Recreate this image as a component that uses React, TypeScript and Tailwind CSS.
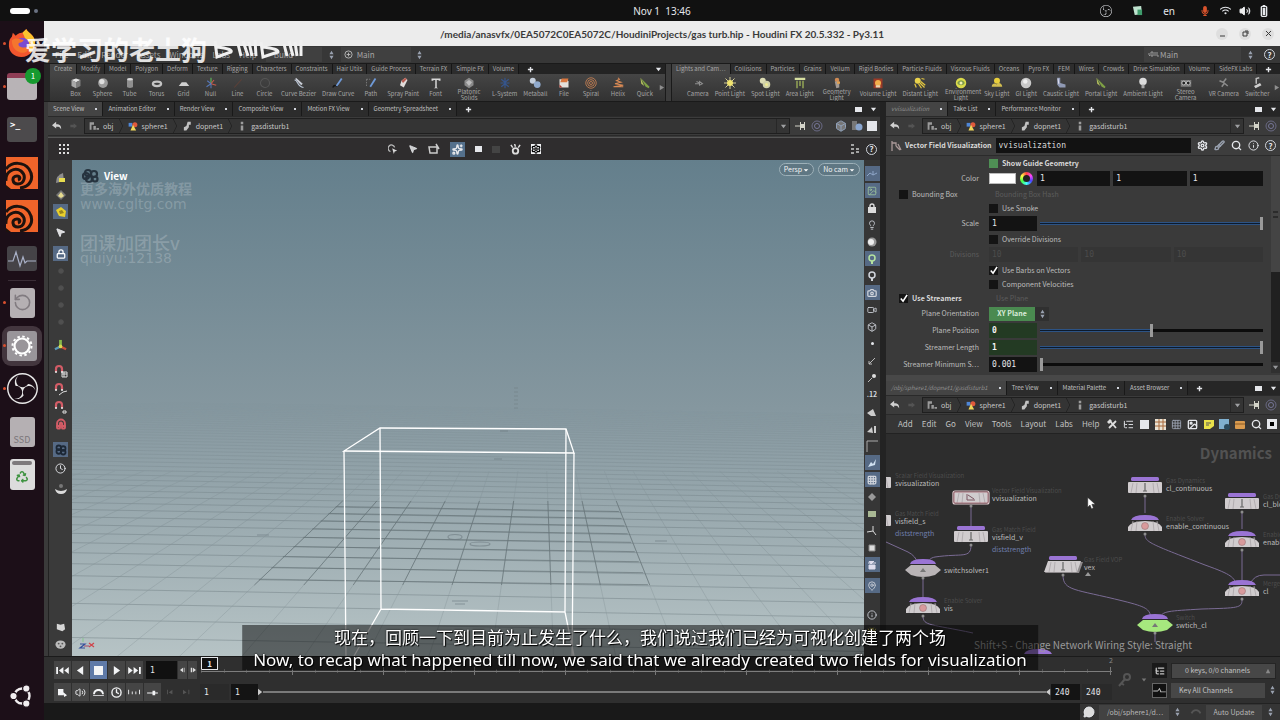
import type { ReactNode } from "react"
import clsx from "clsx"
import {
  BoxIcon, BugIcon, CameraIcon, CircleIcon, ClockIcon, Grid3x3Icon, ImageIcon,
  InfoIcon, LightbulbIcon, ListTreeIcon, LockIcon, MagnetIcon, MapPinIcon, MousePointer2Icon,
  RotateCcwIcon, SearchIcon, SettingsIcon, SparklesIcon, VideoIcon, BrushIcon,
  Volume2Icon, MessageCircleIcon,
} from "lucide-react"
import { FaRecycle, FaWifi, FaMicrophone, FaBatteryFull } from "react-icons/fa6"
import { SiObsstudio } from "react-icons/si"

type Tool = { name: string; icon: string; wide?: boolean }

const MENUS = ["File", "Edit", "Render", "Assets", "Windows", "Labs", "Help"]

const LEFT_SHELF_TABS = [
  "Create", "Modify", "Model", "Polygon", "Deform", "Texture", "Rigging", "Characters", "Constraints",
  "Hair Utils", "Guide Process", "Terrain FX", "Simple FX", "Volume",
]

const RIGHT_SHELF_TABS = [
  "Lights and Cam…", "Collisions", "Particles", "Grains", "Vellum", "Rigid Bodies", "Particle Fluids",
  "Viscous Fluids", "Oceans", "Pyro FX", "FEM", "Wires", "Crowds", "Drive Simulation", "Volume", "SideFX Labs",
]

const LEFT_TOOLS: Tool[] = [
  { name: "Box", icon: "box" },
  { name: "Sphere", icon: "sphere" },
  { name: "Tube", icon: "tube" },
  { name: "Torus", icon: "torus" },
  { name: "Grid", icon: "grid" },
  { name: "Null", icon: "null" },
  { name: "Line", icon: "line" },
  { name: "Circle", icon: "circle" },
  { name: "Curve Bezier", icon: "bezier" },
  { name: "Draw Curve", icon: "draw" },
  { name: "Path", icon: "path" },
  { name: "Spray Paint", icon: "spray" },
  { name: "Font", icon: "font" },
  { name: "Platonic Solids", icon: "platonic", wide: true },
  { name: "L-System", icon: "lsystem" },
  { name: "Metaball", icon: "metaball" },
  { name: "File", icon: "file" },
  { name: "Spiral", icon: "spiral" },
  { name: "Helix", icon: "helix" },
  { name: "Quick", icon: "portal" },
]

const RIGHT_TOOLS: Tool[] = [
  { name: "Camera", icon: "camera" },
  { name: "Point Light", icon: "point" },
  { name: "Spot Light", icon: "spot" },
  { name: "Area Light", icon: "area" },
  { name: "Geometry Light", icon: "geo", wide: true },
  { name: "Volume Light", icon: "volume" },
  { name: "Distant Light", icon: "distant" },
  { name: "Environment Light", icon: "env", wide: true },
  { name: "Sky Light", icon: "sky" },
  { name: "GI Light", icon: "gi" },
  { name: "Caustic Light", icon: "caustic" },
  { name: "Portal Light", icon: "portal" },
  { name: "Ambient Light", icon: "ambient" },
  { name: "Stereo Camera", icon: "stereo", wide: true },
  { name: "VR Camera", icon: "vr" },
  { name: "Switcher", icon: "switcher" },
]

const SHELF_ART: Record<string, ReactNode> = {
  box: <><path d="M2 4l6-2 6 2-6 3z" fill="#e4e4e4" /><path d="M2 4l6 3v8l-6-3z" fill="#a9a9a9" /><path d="M14 4L8 7v8l6-3z" fill="#7d7d7d" /></>,
  sphere: <><circle cx="8" cy="8" r="6.5" fill="#9c9c9c" /><circle cx="6.5" cy="6" r="3.5" fill="#dedede" /></>,
  tube: <><path d="M4 3v10c0 2 8 2 8 0V3z" fill="#8f8f8f" /><ellipse cx="8" cy="3" rx="4" ry="1.6" fill="#d8d8d8" /></>,
  torus: <ellipse cx="8" cy="9" rx="5.5" ry="3" fill="none" stroke="#c4c4c4" strokeWidth="3" />,
  grid: <path d="M5 7h6l4 5H1z" fill="#cfcfcf" />,
  null: <><path d="M8 1v8" stroke="#5db35a" strokeWidth="1.6" /><path d="M8 9l7 2M8 9l4-5" stroke="#c75a4a" strokeWidth="1.6" /><path d="M8 9l-6 4M8 9L3 5M8 9v6" stroke="#5678b8" strokeWidth="1.4" /></>,
  line: <path d="M3 14L13 3" stroke="#5d4038" strokeWidth="1.4" />,
  circle: <circle cx="8" cy="8" r="6" fill="none" stroke="#555" strokeWidth="1.4" />,
  bezier: <><path d="M2 4c5 0 3 9 12 10" fill="none" stroke="#b9c4d4" strokeWidth="1.6" /><path d="M4 1l9 8-2 2-8-8z" fill="#c9cdd6" /></>,
  draw: <><path d="M1 14c3-6 4 0 7-3" fill="none" stroke="#141414" strokeWidth="2" /><path d="M13 2L6 12" stroke="#6f9ad8" strokeWidth="2.4" /></>,
  path: <><path d="M2 3h5M2 3v10" fill="none" stroke="#888" strokeDasharray="2 1.5" /><path d="M14 2L7 13" stroke="#6f9ad8" strokeWidth="2.4" /></>,
  spray: <><path d="M6 5l5-4 3 3-5 10-5-3z" fill="#e0dcda" /><path d="M6 5l5-4 2 2-5 5z" fill="#b65a50" /></>,
  font: <path d="M2 2h12v3h-2l-1-1H9v10l2 1H5l2-1V4H5L4 5H2z" fill="#d8d8d8" />,
  platonic: <><path d="M8 1l6 4v6l-6 4-6-4V5z" fill="#8a8a8a" /><path d="M8 4l4 3-4 5-4-5z" fill="#bdbdbd" /></>,
  lsystem: <path d="M8 1v14M3 3l5 4 5-4M2 8h12M3 13l5-4 5 4" fill="none" stroke="#35568f" strokeWidth="1.5" />,
  metaball: <><circle cx="5" cy="5" r="4" fill="#c4cedb" /><circle cx="11" cy="10" r="4.5" fill="#8fa9cc" /></>,
  file: <><path d="M2 3h10l2 3v8H2z" fill="#e4e1dc" /><path d="M5 2h9l-2 5H3z" fill="#d9773f" /><path d="M2 10l4 4H2z" fill="#b03a30" /></>,
  spiral: <><circle cx="8" cy="8" r="7" fill="none" stroke="#d98a55" /><circle cx="8" cy="8" r="4.5" fill="none" stroke="#d98a55" /><circle cx="8" cy="8" r="2" fill="none" stroke="#d98a55" /></>,
  helix: <path d="M8 1l2 2-4 2 6 2-8 2 11 2-13 2h13" fill="none" stroke="#d98a55" strokeWidth="1.4" />,
  camera: <path d="M6 6l4 2V6l4 3-4 2V9H4" fill="none" stroke="#8d8d8d" strokeWidth="1.4" />,
  point: <><path d="M8 0v16M0 8h16M2 2l12 12M14 2L2 14" stroke="#e5dfa0" strokeWidth="1.2" /><circle cx="8" cy="8" r="4" fill="#f0e36f" /></>,
  spot: <><circle cx="5" cy="5" r="4" fill="#dcdcb4" /><circle cx="10" cy="10" r="5" fill="#cfd0a8" /><circle cx="10" cy="10" r="2" fill="#eeea90" /></>,
  area: <><path d="M1 1h14v3H1z" fill="#d7dfa0" /><path d="M4 5v10M8 5v7M12 5v10" stroke="#a9bf5c" strokeWidth="1.6" /></>,
  geo: <><circle cx="8" cy="4" r="3" fill="#cf8b55" /><path d="M5 6h6v8l-4 1z" fill="#a39a94" /><path d="M8 6h4v3H8z" fill="#e3a04d" /></>,
  volume: <><rect x="2" y="2" width="12" height="13" fill="#9d3a26" /><circle cx="8" cy="8" r="4" fill="#f2b04c" /><path d="M5 11h6v3H5z" fill="#e9d7b0" /></>,
  distant: <><circle cx="5" cy="5" r="4" fill="#e9d24c" /><path d="M1 9l2 5M6 9l4 6M9 6l6 5M10 2l4 1M8 8l6 6" stroke="#e3c63f" strokeWidth="1.6" /></>,
  env: <><circle cx="8" cy="8" r="7" fill="#d9d94a" /><path d="M3 8c2-5 8-5 10 0-2 4-8 4-10 0z" fill="#7d9a4a" /><circle cx="8" cy="8" r="2" fill="#f3f0b0" /></>,
  sky: <><circle cx="8" cy="5" r="4" fill="#e9cf3c" /><path d="M1 13c0-5 5-5 6-3 2-4 8-2 8 3z" fill="#d2bd50" /></>,
  gi: <><circle cx="8" cy="8" r="7" fill="#c9c9c9" /><circle cx="7" cy="6" r="3" fill="#efefef" /></>,
  caustic: <><path d="M3 1l4 0v7l7 2v4H6l-3-4z" fill="#8f99b4" /><path d="M4 2l1 7" stroke="#dde" strokeWidth="1.5" /></>,
  portal: <><path d="M2 1l12 12-1 2-4-2z" fill="#7fa045" /><path d="M2 1l5 11-4-3z" fill="#b3bf5d" /></>,
  ambient: <><circle cx="8" cy="6" r="5" fill="#dcdcdc" /><path d="M6 10h4v5H6z" fill="#a8a8a8" /></>,
  stereo: <><path d="M1 4h14v9H1z" fill="#7c7c7c" /><circle cx="5" cy="8" r="2.5" fill="#222" stroke="#ddd" /><circle cx="11" cy="8" r="2.5" fill="#222" stroke="#ddd" /></>,
  vr: <path d="M2 5l5 2 4-5M7 7l6 5M5 13l3-4" fill="none" stroke="#8c8c8c" strokeWidth="2" />,
  switcher: <><path d="M4 12l8-4 2 3-8 4z" fill="#cfcfcf" /><path d="M7 9V2l4-1" fill="none" stroke="#bdbdbd" strokeWidth="2" /></>,
}

function Art({ name }: { name: string }) {
  return <svg viewBox="0 0 16 16" className="size-3 shrink-0">{SHELF_ART[name]}</svg>
}

function Plus() {
  return (
    <button aria-label="New tab" className="flex items-center px-2 text-gray-200">
      <svg viewBox="0 0 8 8" className="size-[7px]"><path d="M4 1v6M1 4h6" stroke="currentColor" strokeWidth="1.6" /></svg>
    </button>
  )
}

function Caret() {
  return <svg viewBox="0 0 8 8" className="size-[7px] shrink-0 text-gray-200"><path d="M1 2h6L4 6z" fill="currentColor" /></svg>
}

function UpDown() {
  return (
    <svg viewBox="0 0 8 12" className="w-[7px] h-[10px] shrink-0 text-gray-400">
      <path d="M4 1l2.5 4h-5zM4 11l2.5-4h-5z" fill="currentColor" />
    </svg>
  )
}

function Shelf({ tabs, tools, className }: { tabs: string[]; tools: Tool[]; className?: string }) {
  return (
    <div className={clsx("flex flex-col min-w-0 overflow-hidden", className)}>
      <div className="flex h-[13px] bg-[#232323] text-[6px] text-[#a8a8a8]">
        {tabs.map((t, i) => (
          <button
            key={t}
            className={clsx(
              "px-1 border-r border-[#161616] whitespace-nowrap shrink-0",
              i === 0 ? "bg-[#454545]" : "bg-[#2d2d2d]"
            )}
          >
            {t}
          </button>
        ))}
        <Plus />
        <div className="ml-auto flex items-center pr-[3px]"><Caret /></div>
      </div>
      <div className="relative flex-1 flex items-start pl-3 pt-[3px] bg-linear-to-b from-[#454545] to-[#323232] text-[6px] text-[#a5a5a5]">
        {tools.map((t) => (
          <button
            key={t.name}
            className={clsx(
              "shrink-0 flex flex-col items-center",
              t.wide ? "w-10" : "min-w-[27px] px-[3px] gap-[2px]"
            )}
          >
            <Art name={t.icon} />
            <span className={clsx("leading-[6px]", t.wide ? "w-8" : "whitespace-nowrap")}>{t.name}</span>
          </button>
        ))}
        <svg viewBox="0 0 8 8" className="absolute right-0 top-[10px] size-[7px]"><path d="M2 1l5 3-5 3z" fill="#8f8f8f" /></svg>
      </div>
    </div>
  )
}

function PaneTabs({ tabs, italic }: { tabs: string[]; italic?: boolean }) {
  return (
    <div className="flex h-[14px] shrink-0 bg-[#262626] text-[6px] text-[#c0c0c0] overflow-hidden">
      {tabs.map((t, i) => (
        <button
          key={t}
          className={clsx(
            "flex items-center gap-[11px] px-[5px] border-r border-[#191919] whitespace-nowrap shrink-0",
            i === 0 ? "bg-[#444]" : "bg-[#2c2c2c]",
            i === 0 && italic && "italic text-[#8d8d8d]"
          )}
        >
          {t}
          <span className="size-[2px] bg-gray-300" />
        </button>
      ))}
      <Plus />
      <div className="ml-auto flex items-center gap-2 pr-[3px]">
        <span className="w-[7px] h-[5px] bg-gray-200" />
        <Caret />
      </div>
    </div>
  )
}

function CrumbIcon({ kind }: { kind: number }) {
  return (
    <svg viewBox="0 0 16 16" className="size-[10px] shrink-0">
      {kind === 0 && <path d="M1 2h7v4H4v8H1zM7 8h4v6H7zM12 11h4v3h-4z" fill="#9a9a9a" />}
      {kind === 1 && <><path d="M1 3h6v6H1z" fill="#4f87d6" /><circle cx="11" cy="6" r="4" fill="#e05a3c" /><path d="M8 6l5 9H4z" fill="#efd75b" /></>}
      {kind === 2 && <path d="M9 1h5v5h-3v4L7 15H3v-5l4-2z" fill="#c2c2c2" />}
      {kind === 3 && <path d="M6 1h4v4H6zM6 7h4v8H6z" fill="#9c9c9c" />}
    </svg>
  )
}

function PathBar({ extras }: { extras?: boolean }) {
  return (
    <div className="flex items-center h-5 shrink-0 bg-[#3b3b3b] border-y border-[#2a2a2a] pl-1 pr-[3px] text-[7px] text-[#c8c8c8]">
      <button aria-label="Back" className="mr-[7px]">
        <svg viewBox="0 0 12 12" className="size-[10px]"><path d="M0 5l5-4v3c5 0 6 2 6 6-2-3-3-3-6-3v2z" fill="#d0d0d0" /></svg>
      </button>
      <button aria-label="Forward" className="mr-[7px]">
        <svg viewBox="0 0 12 12" className="size-[8px]"><path d="M12 6L7 2v2H2v4h5v2z" fill="#545454" /></svg>
      </button>
      <div className="flex-1 flex items-center h-4 border border-[#1f1f1f] bg-[#343434] min-w-0">
        {["obj", "sphere1", "dopnet1", "gasdisturb1"].map((c, i) => (
          <a key={c} href="#" className="flex items-center gap-1 pl-1">
            <CrumbIcon kind={i} />
            {c}
            {i < 3 && <svg viewBox="0 0 6 16" className="w-[6px] h-[14px]"><path d="M1 0l4 8-4 8" fill="none" stroke="#222" /></svg>}
          </a>
        ))}
        <button aria-label="Path history" className="ml-auto w-[13px] h-full flex items-center justify-center border-l border-[#1f1f1f] opacity-60">
          <Caret />
        </button>
      </div>
      <div className="flex items-center gap-1 pl-[5px]">
        <svg viewBox="0 0 12 12" className="size-3"><path d="M0 6h6" stroke="#d3d3c8" /><path d="M5 2h1v2h3V2h1v8H9V8H6v2H5z" fill="#d3d3c8" /></svg>
        <svg viewBox="0 0 12 12" className="size-3"><circle cx="6" cy="6" r="5" fill="none" stroke="#6a6a85" /><circle cx="6" cy="6" r="2.5" fill="none" stroke="#77779a" /></svg>
        {extras && (
          <>
            <BoxIcon className="ml-2 size-3 text-slate-400" fill="#777" />
            <svg viewBox="0 0 12 12" className="size-3"><path d="M1 1h5v9H1z" fill="#777" /><circle cx="8" cy="7" r="3.5" fill="#8aa6cf" /></svg>
            <span className="size-[10px] bg-gray-200" />
          </>
        )}
      </div>
    </div>
  )
}

function Check({ id, label, checked, bold, green }: {
  id: string; label: string; checked?: boolean; bold?: boolean; green?: boolean
}) {
  return (
    <span className="flex items-center">
      <span className="relative size-[9px] mr-1">
        <input
          id={id}
          type="checkbox"
          defaultChecked={checked}
          className={clsx("block appearance-none size-[9px]", green ? "bg-[#4f8f55]" : "bg-[#141414]")}
        />
        {checked && (
          <svg viewBox="0 0 10 10" className="absolute inset-0 pointer-events-none">
            <path d="M2 5l2.5 3L9 1" fill="none" stroke="#fff" strokeWidth="1.8" />
          </svg>
        )}
      </span>
      <label htmlFor={id} className={clsx("whitespace-nowrap", bold && "font-bold text-[#d8d8d8]")}>{label}</label>
    </span>
  )
}

function Param({ label, htmlFor, left, tall, dim, children }: {
  label?: string; htmlFor?: string; left?: ReactNode; tall?: boolean; dim?: boolean; children: ReactNode
}) {
  return (
    <div className={clsx("flex items-center", tall ? "h-[17px]" : "h-[14px]")}>
      <div className={clsx("w-[93px] mr-[10px] shrink-0 flex", left ? "pl-[13px]" : "justify-end")}>
        {left ?? <label htmlFor={htmlFor} className={clsx("whitespace-nowrap", dim && "text-[#5c5c5c]")}>{label}</label>}
      </div>
      <div className="flex-1 flex items-center min-w-0">{children}</div>
    </div>
  )
}

function Slider({ label, value }: { label: string; value: number }) {
  return (
    <div className="relative flex-1 h-[13px] ml-[3px] flex items-center">
      <div className="w-full h-[3px] bg-[#0c0c0c]">
        <div className="h-[3px] bg-[#0c1a2c] border-y border-[#2d5384]" style={{ width: `${value}%` }} />
      </div>
      <input
        type="range"
        aria-label={label}
        defaultValue={value}
        className="absolute inset-0 w-full h-full appearance-none bg-transparent [&::-webkit-slider-thumb]:appearance-none [&::-webkit-slider-thumb]:w-[3px] [&::-webkit-slider-thumb]:h-[13px] [&::-webkit-slider-thumb]:bg-[#9a9a9a]"
      />
    </div>
  )
}

const FIELD = "h-[15px] min-w-0 px-[3px] font-['DejaVu_Sans_Mono',monospace] text-[8px]"

function Field({ id, label, value, className }: { id?: string; label?: string; value: string; className?: string }) {
  return <input id={id} aria-label={label} defaultValue={value} className={clsx(FIELD, className)} />
}

function Parameters() {
  return (
    <>
      <div className="flex items-center h-5 shrink-0 bg-[#3d3d3d] pl-1 pr-1 text-[7px] border-b border-[#2b2b2b]">
        <svg viewBox="0 0 12 12" className="size-3 mr-[3px]"><path d="M2 1v10M2 3h4v3M6 6l4 4M8 4l3 6" fill="none" stroke="#a99" strokeWidth="1.3" /></svg>
        <label htmlFor="op-name" className="font-bold text-[#dadada] whitespace-nowrap mr-1">Vector Field Visualization</label>
        <Field id="op-name" value="vvisualization" className="flex-1 bg-[#121212] text-[#dadada]" />
        <div className="flex items-center gap-[6px] pl-[6px] text-gray-200">
          <SettingsIcon className="size-[11px]" strokeWidth={3} />
          <BrushIcon className="size-[11px] text-gray-400" strokeWidth={3} />
          <SearchIcon className="size-[11px]" strokeWidth={3} />
          <InfoIcon className="size-[11px]" />
          <HelpDot />
        </div>
      </div>
      <div className="flex shrink-0 bg-[#3a3a3a] text-[7px] text-[#bdbdbd]">
        <div className="flex-1 min-w-0">
          <Param><Check id="guide" label="Show Guide Geometry" bold green /></Param>
          <Param label="Color" htmlFor="color-r" tall>
            <span className="w-[27px] h-[11px] bg-white border border-[#bbb] shrink-0" />
            <span className="size-[13px] mx-1 shrink-0 rounded-full bg-[conic-gradient(#f44,#f4f,#44f,#4ff,#4f4,#ff4,#f44)] flex items-center justify-center">
              <span className="size-[7px] rounded-full bg-[#222]" />
            </span>
            <Field id="color-r" value="1" className="flex-1 bg-[#131313] text-gray-200 mr-[3px]" />
            <Field label="Color green" value="1" className="flex-1 bg-[#131313] text-gray-200 mr-[3px]" />
            <Field label="Color blue" value="1" className="flex-1 bg-[#131313] text-gray-200" />
          </Param>
          <Param left={<Check id="bbox" label="Bounding Box" />}><span className="pl-[6px] text-[#5c5c5c]">Bounding Box Hash</span></Param>
          <Param><Check id="smoke" label="Use Smoke" /></Param>
          <Param label="Scale" htmlFor="scale" tall>
            <Field id="scale" value="1" className="w-12 bg-[#131313] text-gray-200" />
            <Slider label="Scale slider" value={100} />
          </Param>
          <Param><Check id="override" label="Override Divisions" /></Param>
          <Param label="Divisions" htmlFor="div-x" tall dim>
            <Field id="div-x" value="10" className="flex-1 bg-[#353535] text-[#4c4c4c] mr-[3px]" />
            <Field label="Divisions Y" value="10" className="flex-1 bg-[#353535] text-[#4c4c4c] mr-[3px]" />
            <Field label="Divisions Z" value="10" className="flex-1 bg-[#353535] text-[#4c4c4c]" />
          </Param>
          <Param><Check id="barbs" label="Use Barbs on Vectors" checked /></Param>
          <Param><Check id="component" label="Component Velocities" /></Param>
          <Param left={<Check id="streamers" label="Use Streamers" checked bold />}><span className="pl-[7px] text-[#5c5c5c]">Use Plane</span></Param>
          <Param label="Plane Orientation" htmlFor="orient" tall>
            <select id="orient" defaultValue="XY Plane" className="appearance-none w-[46px] h-[14px] bg-[#4a8a50] text-center text-[7px] font-bold text-[#d9ead9]">
              <option>XY Plane</option>
            </select>
            <span className="w-[14px] h-[14px] flex items-center justify-center bg-[#303030]"><UpDown /></span>
          </Param>
          <Param label="Plane Position" htmlFor="position" tall>
            <Field id="position" value="0" className="w-12 bg-[#233a23] font-bold text-gray-100" />
            <Slider label="Plane Position slider" value={50} />
          </Param>
          <Param label="Streamer Length" htmlFor="length" tall>
            <Field id="length" value="1" className="w-12 bg-[#233a23] font-bold text-gray-100" />
            <Slider label="Streamer Length slider" value={100} />
          </Param>
          <Param label="Streamer Minimum S…" htmlFor="minimum" tall>
            <Field id="minimum" value="0.001" className="w-12 bg-[#131313] text-gray-200" />
            <Slider label="Streamer Minimum slider" value={0} />
          </Param>
        </div>
        <div className="w-[9px] ml-2 bg-[#202020] flex flex-col">
          <div className="h-[116px] bg-[#444] flex items-center justify-center">
            <span className="w-[5px] h-[7px] border-y-2 border-[#2b2b2b]" />
          </div>
          <div className="mt-auto h-[11px] bg-[#3c3c3c] flex items-center justify-center opacity-60"><Caret /></div>
        </div>
      </div>
    </>
  )
}

function HelpDot() {
  return (
    <span className="size-[11px] shrink-0 rounded-full border border-gray-300 flex items-center justify-center text-[8px] leading-none font-bold text-gray-200">?</span>
  )
}

type NetNode = {
  x: number; y: number; name: string; type?: string; note?: string
  shape: "slab" | "dome" | "switch" | "vop" | "tail"; tone?: "selected" | "green"
}

// x / y are the node centre on the network canvas
const NODES: NetNode[] = [
  { x: -12, y: 49, name: "svisualization", type: "Scalar Field Visualization", shape: "tail" },
  { x: 85, y: 64, name: "vvisualization", type: "Vector Field Visualization", shape: "tail", tone: "selected" },
  { x: -12, y: 87, name: "visfield_s", type: "Gas Match Field", note: "diststrength", shape: "tail" },
  { x: 85, y: 103, name: "visfield_v", type: "Gas Match Field", note: "diststrength", shape: "slab" },
  { x: 37, y: 136, name: "switchsolver1", shape: "switch" },
  { x: 37, y: 174, name: "vis", type: "Enable Solver", shape: "dome" },
  { x: 177, y: 133, name: "vex", type: "Gas Field VOP", shape: "vop" },
  { x: 259, y: 54, name: "cl_continuous", type: "Gas Dynamics", shape: "slab" },
  { x: 259, y: 92, name: "enable_continuous", type: "Enable Solver", shape: "dome" },
  { x: 356, y: 70, name: "cl_block", type: "Gas Dynamics", shape: "slab" },
  { x: 356, y: 108, name: "enable_block", type: "Enable Solver", shape: "dome" },
  { x: 356, y: 157, name: "cl", type: "Merge", shape: "dome" },
  { x: 269, y: 191, name: "swtich_cl", type: "Switch", shape: "switch", tone: "green" },
]

function NodeShape({ n }: { n: NetNode }) {
  const fill = n.tone === "green" ? "#a6e87e" : n.shape === "switch" ? "#b9b4b6" : "#d0ccce"
  const top = n.y - 6
  return (
    <g>
      {n.shape === "tail" && <rect x={n.x - 17} y={top} width="34" height="11" rx="1" fill={fill} />}
      {n.shape === "slab" && <><rect x={n.x - 14} y={top - 5} width="28" height="4" rx="1.5" fill="#9a74d4" /><rect x={n.x - 17} y={top} width="34" height="11" rx="1" fill={fill} /></>}
      {n.shape === "dome" && (
        <>
          <path d={`M${n.x - 14} ${top}q2-5 14-5t14 5z`} fill="#9a74d4" />
          <path d={`M${n.x - 17} ${top + 11}v-4q3-6 17-6t17 6v4z`} fill={fill} />
          <circle cx={n.x} cy={top + 6} r="3.5" fill="#d89a9c" stroke="#8b6b6d" strokeWidth="0.5" />
        </>
      )}
      {n.shape === "switch" && (
        <>
          <path d={`M${n.x - 13} ${top}q1-5 13-5t13 5z`} fill="#9a74d4" />
          <path d={`M${n.x - 18} ${top + 6}l6-5h24l6 5-6 5q-12 4-24 0z`} fill={fill} />
          <path d={`M${n.x - 3} ${top + 8}l3-4 3 4z`} fill="#777" />
        </>
      )}
      {n.shape === "vop" && (
        <>
          <rect x={n.x - 14} y={top - 5} width="28" height="4" rx="1.5" fill="#9a74d4" />
          <path d={`M${n.x - 14} ${top + 1}h34l-4 11h-34z`} fill="#8d898b" />
          <path d={`M${n.x - 15} ${top}h33l-4 11h-33z`} fill={fill} />
        </>
      )}
      {n.shape !== "switch" && <path d={`M${n.x - 12} ${top + 1}l-2 10M${n.x - 8} ${top + 1}l-1 10M${n.x + 8} ${top + 1}l1 10M${n.x + 12} ${top + 1}l2 10`} stroke="#aaa5a8" strokeWidth="0.8" />}
      {(n.shape === "slab" || n.shape === "vop") && <path d={`M${n.x} ${top + 1}v8M${n.x - 2} ${top + 9}h4`} stroke="#666" fill="none" strokeWidth="1.2" />}
      {n.tone === "selected" && (
        <>
          <rect x={n.x - 18} y={top - 1} width="36" height="13" rx="2" fill="none" stroke="#e6cfd3" strokeWidth="1.2" />
          <rect x={n.x - 17} y={top} width="34" height="11" rx="1" fill="none" stroke="#a35f6c" strokeWidth="0.8" />
          <path d={`M${n.x - 4} ${top + 2}v6h8M${n.x - 3} ${top + 3}l6 4`} stroke="#7a5560" fill="none" />
        </>
      )}
      <circle cx={n.x} cy={top + 14} r="1.5" fill="#8d8d8d" />
    </g>
  )
}

function Network() {
  return (
    <div className="relative flex-1 bg-[#2d2d2d] overflow-hidden text-[7px]">
      <svg className="absolute inset-0 w-full h-full">
        <g fill="none" stroke="#7a6b94" strokeWidth="1">
          <path d="M85 72v20M85 111c0 14-9 8-36 12-5 1-6 3-8 7M0 108l22 10q8 4 10 12M37 145v18M37 182c0 10 8 8 50 17M177 141c0 16 12 14 60 26 24 6 26 8 28 16M259 62v17M259 100c0 8 3 9 60 31 28 10 28 12 32 20M356 78v17M356 116v30M394 141h-16q-10 0-14 9M356 166c0 8-4 8-40 9-34 2-40 2-42 9M269 198v10" />
        </g>
        {NODES.map((n) => <NodeShape key={n.name} n={n} />)}
        <path d="M138 220q2-5 14-5t14 5z" fill="#9a74d4" />
        <path d="M199 142l3-4 3 4z" fill="#999" />
      </svg>
      {NODES.map((n) => (
        <div key={n.name} className="absolute whitespace-nowrap" style={{ left: n.x + 21, top: n.y - 11 }}>
          <div className="h-[7px] leading-[7px] text-[#4c4c4c] text-[6px]">{n.type}</div>
          <div className="h-2 leading-[8px] text-[#bcbcbc]">{n.name}</div>
          {n.note && <div className="mt-1 leading-[8px] text-[#6f7fae]">{n.note}</div>}
        </div>
      ))}
      <div className="absolute top-2 right-2 text-[15px] leading-[22px] font-bold text-[#525252]">Dynamics</div>
      <div className="absolute bottom-1 left-0 w-full text-center text-[10px] leading-[14px] text-[#9a9a9a]">
        Shift+S - Change Network Wiring Style: Straight
      </div>
      <svg viewBox="0 0 12 16" className="absolute left-[201px] top-[63px] w-[9px] h-[13px]">
        <path d="M1 0v13l3-3 2 5 2.5-1-2-5H11z" fill="#fff" stroke="#222" strokeWidth="0.6" />
      </svg>
    </div>
  )
}

const HORIZON = 311
const VX = 541

// reference plane drawn in the same space as the camera view
function GroundPlane() {
  const rows: number[] = []
  for (let k = -2; k < 44; k++) rows.push(HORIZON + 1 / (0.0032 + 0.000174 * k))
  const cols: number[] = []
  for (let k = -34; k < 34; k++) cols.push(k + 0.2)
  const at = (u: number, y: number) => VX + u * 0.181 * (y - HORIZON)
  return (
    <svg viewBox="72 159 792 496" preserveAspectRatio="xMidYMid slice" className="absolute inset-0 w-full h-full">
      <defs>
        <linearGradient id="fade" x1="0" y1="400" x2="0" y2="520" gradientUnits="userSpaceOnUse">
          <stop offset="0" stopColor="#fff" stopOpacity="0" />
          <stop offset="1" stopColor="#fff" />
        </linearGradient>
        <mask id="ground"><rect x="72" y="380" width="792" height="280" fill="url(#fade)" /></mask>
      </defs>
      <g mask="url(#ground)" stroke="#667479" strokeWidth="0.8" opacity="0.5">
        {rows.map((y) => <path key={y} d={`M72 ${y - 5}L864 ${y + 9}`} />)}
        {cols.map((u) => <path key={u} d={`M${at(u, 470)} 470L${at(u, 660)} 660`} opacity="0.5" />)}
      </g>
      <g stroke="#566266" strokeWidth="0.8" opacity="0.65">
        {rows.slice(5, 14).map((y) => <path key={y} d={`M${at(-5.8, y)} ${y - 1}L${at(2.2, y)} ${y + 4}`} />)}
        {cols.filter((u) => u > -6 && u < 2.5).map((u) => <path key={u} d={`M${at(u, 500)} 500L${at(u, 584)} 584`} />)}
      </g>
      <g fill="none" stroke="#6d7a80" strokeWidth="1.2" opacity="0.6">
        <ellipse cx="455" cy="536" rx="7" ry="2.5" /><ellipse cx="480" cy="543" rx="10" ry="2" />
        <path d="M452 600h16M455 603h10M500 430h8M494 458h8M257 534h12M655 540h12" />
        <path d="M516 386v24" strokeDasharray="2 2" strokeWidth="4" opacity="0.4" />
      </g>
      <g fill="none" stroke="#fff" strokeWidth="1.3">
        <path d="M380 427L566 428L574 452L344 450Z" />
        <path d="M380 427L381 608L565 611L566 428M344 450L346 660M574 452L572 660M381 608L354 655M565 611L574 655" />
      </g>
      <path d="M80 643h5l-5 4h5" fill="none" stroke="#35509c" strokeWidth="1.2" />
      <path d="M84 645h5" stroke="#a04a6a" />
      <path d="M89 642l5 4M94 642l-5 4" stroke="#d0434a" strokeWidth="1.2" />
      <path d="M83 637v4" stroke="#83c58a" />
    </svg>
  )
}

function ToolCell({ active, className, children }: { active?: boolean; className?: string; children: ReactNode }) {
  return (
    <button className={clsx("w-full h-[17px] shrink-0 flex items-center justify-center", className)}>
      <span className={clsx("size-[15px] flex items-center justify-center", active && "bg-[#566a85]")}>{children}</span>
    </button>
  )
}

function View() {
  return (
    <div className="relative flex-1 overflow-hidden bg-linear-to-b from-[#647f8c] via-[#85979f] via-50% to-[#b6c3c5]">
      <GroundPlane />
      <div className="absolute left-[10px] top-2 flex items-center gap-1 text-[10px] leading-[14px] font-bold text-white">
        <svg viewBox="0 0 18 16" className="w-[18px] h-4">
          <g fill="none" stroke="#26333f" strokeWidth="2.2"><circle cx="6" cy="5" r="3" /><circle cx="12" cy="6" r="3" /><circle cx="13" cy="11" r="2.5" /><circle cx="7" cy="11" r="3" /><circle cx="4" cy="8" r="3" /></g>
        </svg>
        View
      </div>
      <div className="absolute left-2 top-5 text-[14px] leading-[16px] font-bold text-white/20 whitespace-nowrap">
        <div>更多海外优质教程</div>
        <div className="font-['DejaVu_Sans',sans-serif] font-normal text-[14px]">www.cgltg.com</div>
        <div className="mt-[22px] text-[18px] font-medium">团课加团长v</div>
        <div className="font-['DejaVu_Sans',sans-serif] font-normal text-[14px]">qiuiyu:12138</div>
      </div>
      <div className="absolute right-1 top-[3px] flex gap-1 text-[7px] text-gray-100">
        {["Persp", "No cam"].map((b) => (
          <button key={b} className="h-[13px] px-1 rounded-full border border-[#9db0b8] bg-[#5f7783] flex items-center gap-px">
            {b} <svg viewBox="0 0 8 8" className="size-[6px]"><path d="M1 3h6L4 6z" fill="#fff" /></svg>
          </button>
        ))}
      </div>
    </div>
  )
}

const MAGNETS = ["M8 8h5v5H8zM8 10h5M10 8v5", "M5 13l4-3 4-1", "M9 11h3v2H9z", ""]

function LeftToolbar() {
  return (
    <div className="w-6 shrink-0 bg-[#3a3a3a] border-l border-[#222] pt-[9px] pb-[3px] flex flex-col text-gray-200">
      <ToolCell><svg viewBox="0 0 12 12" className="size-3"><path d="M1 11q0-8 7-10l1 8z" fill="#8d8d8d" /><path d="M4 6h6v4H4z" fill="#e6dc4f" /></svg></ToolCell>
      <ToolCell><svg viewBox="0 0 12 12" className="size-3"><path d="M6 1l5 5-5 5-5-5z" fill="#777" /><path d="M6 3l3 4-3 2-3-2z" fill="#e6dc8f" /></svg></ToolCell>
      <ToolCell active><svg viewBox="0 0 12 12" className="size-3"><path d="M1 4l5-3 5 4-1 6-6-1z" fill="#e8cf2c" /><path d="M4 5l3-1 2 3-4 1z" fill="#98841c" /></svg></ToolCell>
      <ToolCell className="mt-1"><MousePointer2Icon className="size-[11px]" fill="#ddd" /></ToolCell>
      <ToolCell active className="mt-1"><LockIcon className="size-[10px] text-white" strokeWidth={3} /></ToolCell>
      {[0, 1, 2, 3].map((i) => (
        <ToolCell key={i} className="text-[#505050]"><CircleIcon className="size-[6px]" fill="#505050" /></ToolCell>
      ))}
      <ToolCell className="mt-[7px]">
        <svg viewBox="0 0 14 14" className="size-[13px]"><path d="M7 7V1" stroke="#86b84a" strokeWidth="3" /><path d="M7 8l6 3" stroke="#c94f3d" strokeWidth="2.5" /><path d="M7 8l-6 3" stroke="#5a9ab8" strokeWidth="2.5" /><circle cx="7" cy="8" r="2" fill="#d8d84f" /></svg>
      </ToolCell>
      {MAGNETS.map((d, i) => (
        <ToolCell key={i} className={clsx("text-[#d25c66]", i === 0 ? "mt-2" : "mt-px")}>
          {d ? (
            <svg viewBox="0 0 14 14" className="size-[14px]">
              <path d="M2 8V5a3 3 0 0 1 6 0v3" fill="none" stroke="#d25c66" strokeWidth="2.2" />
              <path d="M1 8h2M7 8h2" stroke="#eee" strokeWidth="1.6" />
              <path d={d} fill="none" stroke="#ddd" />
            </svg>
          ) : (
            <MagnetIcon className="size-3 -rotate-45" strokeWidth={4} />
          )}
        </ToolCell>
      ))}
      <ToolCell active className="mt-2">
        <svg viewBox="0 0 18 16" className="w-[14px] h-3">
          <g fill="none" stroke="#1c2735" strokeWidth="2.4"><circle cx="6" cy="5" r="3" /><circle cx="12" cy="6" r="3" /><circle cx="12" cy="11" r="3" /><circle cx="6" cy="10" r="3" /></g>
        </svg>
      </ToolCell>
      <ToolCell className="mt-[2px]"><ClockIcon className="size-[11px]" /></ToolCell>
      <ToolCell className="mt-[3px]"><svg viewBox="0 0 12 12" className="size-3"><path d="M0 6q6 4 12 0-1 5-6 5T0 6z" fill="#dcdcdc" /><circle cx="6" cy="3" r="2" fill="#777" /></svg></ToolCell>
      <ToolCell className="mt-auto"><svg viewBox="0 0 12 12" className="size-[11px]"><path d="M2 2l4 1 4-1 1 6-3 2-6-2z" fill="#d6d6d6" /></svg></ToolCell>
      <ToolCell><svg viewBox="0 0 12 12" className="size-[11px]"><ellipse cx="6" cy="6" rx="5.5" ry="4.5" fill="#bbb" /><circle cx="4" cy="5" r="1" fill="#555" /><circle cx="8" cy="5" r="1" fill="#555" /><circle cx="6" cy="8" r="1" fill="#555" /></svg></ToolCell>
    </div>
  )
}

function RightToolbar() {
  const s = "size-[10px]"
  const dot = <span className="size-[3px] rounded-full bg-gray-200" />
  const bulb = <svg viewBox="0 0 10 10" className={s}><circle cx="5" cy="4" r="3" fill="none" stroke="currentColor" strokeWidth="1.5" /><path d="M4 7h2v3H4z" fill="currentColor" /></svg>
  const cells: [ReactNode, boolean][] = [
    [<svg viewBox="0 0 10 10" className={s}><path d="M0 7l3-3 3 2 4-2M6 2v4" fill="none" stroke="#8fa6c8" /></svg>, true],
    [<ImageIcon className={clsx(s, "text-[#9cc49c]")} />, true],
    [<svg viewBox="0 0 10 10" className={s}><path d="M1 4h8v6H1z" fill="#ddd" /><path d="M3 5V3a2 2 0 0 1 4 0v2" fill="none" stroke="#ddd" strokeWidth="1.4" /></svg>, false],
    [<LightbulbIcon className={s} />, false],
    [<svg viewBox="0 0 10 10" className={s}><circle cx="5" cy="5" r="4.5" fill="#999" /><circle cx="4" cy="5" r="3" fill="#eee" /></svg>, false],
    [<span className="text-[#b5e3a0]">{bulb}</span>, true],
    [bulb, false],
    [<CameraIcon className={s} strokeWidth={3} />, true],
    [<VideoIcon className={s} />, false],
    [<BoxIcon className={s} />, false],
    [dot, false],
    [<svg viewBox="0 0 10 10" className={s}><path d="M2 8l6-6M2 5v3h3" stroke="#bbb" fill="none" /></svg>, false],
    [<svg viewBox="0 0 10 10" className={s}><path d="M1 9l4-4" stroke="#bbb" /><circle cx="7" cy="3" r="2" fill="#ddd" /></svg>, false],
    [<span className="text-[7px] font-bold">.12</span>, false],
    [<svg viewBox="0 0 10 10" className={s}><path d="M0 6l6-4 3 7-5 0z" fill="#ccc" /></svg>, false],
    [<svg viewBox="0 0 10 10" className={s}><path d="M0 8l5-5 1 6zM7 2h2v7H7z" fill="#ccc" /></svg>, false],
    [<svg viewBox="0 0 12 12" className="size-3"><path d="M1 12V1h11" fill="none" stroke="#aaa" /></svg>, false],
    [<svg viewBox="0 0 10 10" className={s}><path d="M1 9l3-5 2 2 3-5-1 6z" fill="#cfe0f0" /></svg>, true],
    [<Grid3x3Icon className={s} strokeWidth={3} />, true],
    [<svg viewBox="0 0 10 10" className={s}><path d="M5 1l4 4-4 4-4-4z" fill="#9a9a9a" /></svg>, false],
    [<svg viewBox="0 0 10 10" className={s}><path d="M1 2h8v6H1z" fill="#a9b894" /></svg>, false],
    [<svg viewBox="0 0 10 10" className={s}><path d="M0 6l6-1V0M6 5l3 4" fill="none" stroke="#ddd" /></svg>, false],
    [<svg viewBox="0 0 10 10" className={s}><path d="M2 2h6v6H2z" fill="#ddd" stroke="#888" /></svg>, false],
    [<svg viewBox="0 0 10 10" className={s}><path d="M1 3h8M2 1l2 3 3-3M2 5h6v4H2z" fill="#dde" stroke="#dde" /></svg>, true],
  ]
  return (
    <div className="w-4 shrink-0 bg-[#363636] pt-[5px] flex flex-col text-gray-300">
      {cells.map(([icon, active], i) => <ToolCell key={i} active={active}>{icon}</ToolCell>)}
      <ToolCell active className="mt-1"><MapPinIcon className={s} /></ToolCell>
      <ToolCell className="mt-3"><InfoIcon className={s} /></ToolCell>
      <ToolCell><BugIcon className={clsx(s, "text-[#cfc55a]")} /></ToolCell>
    </div>
  )
}

function HoudiniIcon() {
  return (
    <svg viewBox="0 0 32 32" className="size-8">
      <rect width="32" height="32" fill="#f0642a" />
      <path d="M0 12C6 4 18 5 23 12c6 9 1 18-9 19M0 24C-1 14 9 10 15 14c6 5 3 13-3 13-6 0-7-8-1-8 3 0 4 3 1 4" fill="none" stroke="#1d120e" strokeWidth="3" />
      <path d="M0 32V28l5 4z" fill="#1d120e" />
    </svg>
  )
}

function FirefoxIcon() {
  return (
    <svg viewBox="0 0 30 30" className="size-[29px]">
      <path d="M4 8l1-4 3 3c3-3 6-3 7-3l4-4c0 3 8 5 9 13 1 9-6 16-14 16S0 23 1 15c0-3 1-5 3-7z" fill="#f1562e" />
      <path d="M15 4l4-4c0 3 8 5 9 13 0 5-2 9-5 12-3-6-4-14-8-21z" fill="#fbc32f" />
      <circle cx="15" cy="16" r="7" fill="#7a4bd0" />
      <path d="M4 12c4-4 8-1 11-1 2 0 1 2-2 3-3 0-3 4 1 5 5 1 8-1 9-4 0 8-6 11-11 9-6-2-8-7-8-12z" fill="#f4762e" />
    </svg>
  )
}

function DockItem({ running, active, children }: { running?: boolean; active?: boolean; children: ReactNode }) {
  return (
    <button className="relative w-full h-[43px] shrink-0 flex items-center justify-center">
      {running && <span className="absolute left-[3px] size-[3px] rounded-full bg-[#d9502f]" />}
      <span className={clsx("size-10 rounded-[9px] flex items-center justify-center", active && "bg-[#43363e]")}>{children}</span>
    </button>
  )
}

function Dock() {
  return (
    <nav className="w-11 shrink-0 bg-[#1c0f18] pt-px flex flex-col">
      <DockItem running><FirefoxIcon /></DockItem>
      <DockItem running>
        <span className="relative w-[30px] h-[27px] rounded-[3px] bg-linear-to-b from-[#8f3d55] from-20% to-[#b8b3b6] to-20%">
          <span className="absolute -top-[5px] -right-1 size-4 rounded-full bg-[#179a2f] text-white text-[8px] flex items-center justify-center">1</span>
        </span>
      </DockItem>
      <DockItem><span className="w-[30px] h-[25px] rounded-[3px] bg-[#4c4a4c] p-[3px] text-left text-[9px] leading-[9px] font-bold text-white">&gt;_</span></DockItem>
      <DockItem><HoudiniIcon /></DockItem>
      <DockItem><HoudiniIcon /></DockItem>
      <DockItem>
        <svg viewBox="0 0 30 25" className="w-[30px] h-[25px]"><rect width="30" height="25" rx="3" fill="#454347" /><path d="M1 15h5l3-9 4 14 3-9 2 6 2-2h9" fill="none" stroke="#a9b1c8" strokeWidth="1.2" /></svg>
      </DockItem>
      <div className="mx-2 h-px bg-[#3a2d36] shrink-0" />
      <DockItem running><span className="w-[25px] h-[30px] rounded-[3px] bg-[#b5b0b3] flex items-center justify-center text-[#817b80]"><RotateCcwIcon className="size-[19px]" strokeWidth={2} /></span></DockItem>
      <DockItem running active>
        <svg viewBox="0 0 30 30" className="size-[30px]">
          <rect width="30" height="30" rx="3" fill="#99959a" />
          <circle cx="15" cy="15" r="7.5" fill="none" stroke="#fff" strokeWidth="2.2" />
          <circle cx="15" cy="15" r="9.5" fill="none" stroke="#fff" strokeWidth="2" strokeDasharray="2.5 2.47" />
        </svg>
      </DockItem>
      <DockItem running><SiObsstudio className="size-[31px] text-[#e8e8e8]" /></DockItem>
      <DockItem><span className="w-[25px] h-[30px] rounded-[3px] bg-[#b5b0b3] flex items-end justify-center pb-[3px] text-[9px] text-[#7b767a]">SSD</span></DockItem>
      <DockItem>
        <span className="w-[25px] h-[31px] rounded-[3px] bg-[#dcdcdc] pt-[2px] flex flex-col items-center gap-[6px] text-[#3e9340]">
          <span className="w-5 h-1 rounded-full bg-[#7d797c]" />
          <FaRecycle className="size-3" />
        </span>
      </DockItem>
      <div className="mt-auto h-12 flex items-center justify-center">
        <svg viewBox="0 0 24 24" className="size-6">
          <circle cx="12" cy="12" r="7.5" fill="none" stroke="#f1eef0" strokeWidth="2.4" />
          <g fill="#f1eef0" stroke="#1c0f18" strokeWidth="1.2"><circle cx="3.5" cy="12" r="3.7" /><circle cx="16.3" cy="4.5" r="3.7" /><circle cx="16.3" cy="19.5" r="3.7" /></g>
        </svg>
      </div>
    </nav>
  )
}

const FRAME = "h-4 px-1 text-[8px] font-['DejaVu_Sans_Mono',monospace]"

function Glyph({ d }: { d: string }) {
  return <svg viewBox="0 0 14 10" className="w-[13px] h-[9px]"><path d={d} fill="currentColor" /></svg>
}

function PlayButton({ label, active, children }: { label: string; active?: boolean; children: ReactNode }) {
  return (
    <button
      aria-label={label}
      className={clsx("w-[17px] h-[18px] flex items-center justify-center text-gray-100", active ? "bg-[#5f7aa8]" : "bg-[#454545]")}
    >
      {children}
    </button>
  )
}

function Timeline() {
  return (
    <div className="flex h-[47px] shrink-0 bg-[#2f2f2f] border-t border-[#1b1b1b] pl-[10px] pr-1 text-[7px] text-gray-200">
      <div className="flex-1 flex flex-col min-w-0 gap-1 pt-1">
        <div className="flex h-[18px]">
          <div className="flex gap-px shrink-0">
            <PlayButton label="First frame"><Glyph d="M0 1h2v8H0zM8 1v8L3 5zM14 1v8L9 5z" /></PlayButton>
            <PlayButton label="Play reverse"><Glyph d="M10 0v10L3 5z" /></PlayButton>
            <PlayButton label="Stop" active><Glyph d="M2 0h10v10H2z" /></PlayButton>
            <PlayButton label="Play"><Glyph d="M4 0v10l7-5z" /></PlayButton>
            <PlayButton label="Last frame"><Glyph d="M12 1h2v8h-2zM0 1v8l5-4zM6 1v8l5-4z" /></PlayButton>
            <input aria-label="Current frame" defaultValue="1" className="ml-[2px] w-[31px] bg-[#111] px-1 text-[8px] font-['DejaVu_Sans_Mono',monospace]" />
            <button aria-label="Previous frame" className="w-[9px] bg-[#454545] flex items-center justify-center"><svg viewBox="0 0 8 8" className="size-[6px]"><path d="M4 1v6L0 4zM5 1h1v6H5z" fill="#ddd" /></svg></button>
            <button aria-label="Next frame" className="w-[9px] bg-[#454545] flex items-center justify-center"><svg viewBox="0 0 8 8" className="size-[6px]"><path d="M4 1v6l4-3zM1 1h2v6H1z" fill="#ddd" /></svg></button>
          </div>
          <div className="ml-1 flex-1 h-[11px] relative border-b border-[#7d7d7d]">
            <span className="absolute left-0 bottom-px w-[17px] h-[13px] border border-gray-200 bg-[#111] flex items-center justify-center text-[8px] font-bold">1</span>
            <div className="absolute inset-x-0 -bottom-1 flex h-2 justify-between pr-px">
              {Array.from({ length: 41 }, (_, i) => (
                <span key={i} className={clsx("w-px bg-[#777]", i % 4 === 0 && i > 0 ? "h-2" : "h-1 mt-[2px] opacity-50")} />
              ))}
            </div>
            <span className="absolute -right-px -top-1 text-[#888]">2</span>
          </div>
        </div>
        <div className="flex h-[18px] items-center">
          <div className="flex gap-px shrink-0">
            <PlayButton label="Pick"><Glyph d="M2 1h6v7H2zM7 4l5 4-3 2z" /></PlayButton>
            <PlayButton label="Audio"><Volume2Icon className="size-[11px]" /></PlayButton>
            <PlayButton label="Loop"><Glyph d="M1 7c0-8 12-8 12 0h-2c0-5-8-5-8 0zM1 8h12v1H1z" /></PlayButton>
            <PlayButton label="Real time"><ClockIcon className="size-[11px]" strokeWidth={3} /></PlayButton>
            <PlayButton label="Ticks"><Glyph d="M0 2h1v5H0zM4 4h1v3H4zM8 4h1v3H8zM12 2h1v5h-1z" /></PlayButton>
            <PlayButton label="Scrub"><Glyph d="M1 5h12v1H1zM7 3h3v5H7z" /></PlayButton>
          </div>
          <div className="flex gap-px pl-1 shrink-0 text-[#555]">
            <span className="w-[15px]"><Glyph d="M2 2h1v5H2zM8 2v5L4 5z" /></span>
            <span className="w-[15px]"><Glyph d="M2 2v5l4-2zM8 2v5h1V2z" /></span>
          </div>
          <input aria-label="Global start" defaultValue="1" className={clsx(FRAME, "ml-1 w-[29px] bg-[#2a2a2a]")} />
          <input aria-label="Range start" defaultValue="1" className={clsx(FRAME, "ml-[2px] w-[27px] bg-[#141414]")} />
          <svg viewBox="0 0 6 8" className="w-[5px] h-[8px]"><path d="M0 0v8l5-4z" fill="#ccc" /></svg>
          <div className="flex-1 h-[2px] bg-[#7b7b7b]" />
          <svg viewBox="0 0 6 8" className="w-[5px] h-[8px]"><path d="M5 0v8L0 4z" fill="#ccc" /></svg>
          <input aria-label="Range end" defaultValue="240" className={clsx(FRAME, "w-[29px] bg-[#141414]")} />
          <input aria-label="Global end" defaultValue="240" className={clsx(FRAME, "ml-[2px] w-[30px] bg-[#2a2a2a]")} />
        </div>
      </div>
      <div className="flex items-center shrink-0">
        <div className="w-10 flex justify-center items-center gap-2 text-[#555]">
          <svg viewBox="0 0 16 16" className="size-4"><circle cx="10" cy="5" r="3" fill="none" stroke="currentColor" strokeWidth="2" /><path d="M8 7l-6 7M4 11l3 2" stroke="currentColor" strokeWidth="2" /></svg>
          <svg viewBox="0 0 8 8" className="size-[6px]"><path d="M1 2h6L4 6z" fill="#777" /></svg>
        </div>
        <div className="flex flex-col gap-1 w-[124px] text-[#c4c4c4]">
          <div className="flex items-center gap-1">
            <button aria-label="Keys" className="size-[15px] bg-[#191919] flex items-center justify-center"><ListTreeIcon className="size-[10px]" strokeWidth={3} /></button>
            <button className="flex-1 h-4 pr-3 bg-[#474747] border border-[#252525] flex items-center justify-center relative">
              0 keys, 0/0 channels
              <svg viewBox="0 0 8 8" className="absolute right-1 size-[6px]"><path d="M4 1l3 6H1z" fill="#888" /></svg>
            </button>
          </div>
          <div className="flex items-center gap-1">
            <button aria-label="Channel curve" className="size-[15px] bg-[#111] border border-[#666] flex items-center justify-center"><Glyph d="M0 5h5l2-3 2 4h5v1H8L7 4 5 6H0z" /></button>
            <select aria-label="Key scope" className="appearance-none flex-1 h-[15px] px-2 bg-[#474747]"><option>Key All Channels</option></select>
            <UpDown />
          </div>
        </div>
      </div>
    </div>
  )
}

function BiliMark() {
  return (
    <svg viewBox="0 0 90 22" className="w-[90px] h-[22px]">
      <g fill="none" stroke="#f0f0f0" strokeWidth="3">
        <path d="M2 3l2 16 14-5q2-3-14-5M25 6l3 12M30 3l5 15M36 4l3 14M42 2l1 16" />
        <path d="M48 4l2 15 15-5q1-3-15-5M71 6l3 12M76 3l4 15M82 4l2 14M88 2v16" />
      </g>
    </svg>
  )
}

export default function App() {
  return (
    <div className="relative h-screen min-h-[720px] flex flex-col overflow-hidden bg-[#191919] font-['Noto_Sans_CJK_SC','Noto_Sans',sans-serif] leading-none text-gray-300">
      {/* System bar */}
      <header className="relative h-[21px] shrink-0 bg-[#111] flex items-center px-[10px] font-['Noto_Sans',sans-serif] text-[10px] text-gray-200">
        <span className="w-5 h-[6px] rounded-full bg-white" />
        <span className="ml-1 size-1 rounded-full bg-gray-500" />
        <span className="absolute inset-x-0 text-center pointer-events-none whitespace-pre pl-[44px]">Nov 1  13:46</span>
        <div className="ml-auto flex items-center">
          <SiObsstudio className="size-3 mr-5" />
          <svg viewBox="0 0 12 12" className="size-[11px] mr-5"><path d="M1 2l9-1 1 9-8 1z" fill="#bfe3cf" /><path d="M6 5h5v6H6z" fill="#3f9c6c" /></svg>
          <span className="mr-[25px]">en</span>
          <FaMicrophone className="size-[10px] mr-[10px] text-[#d9532c]" />
          <FaWifi className="size-[11px] mr-2" />
          <Volume2Icon className="size-3 mr-[7px]" fill="#eee" />
          <FaBatteryFull className="size-[12px] -rotate-90" />
        </div>
      </header>

      <div className="flex-1 flex min-h-0">
        <Dock />
        <main className="flex-1 flex flex-col min-w-0">
          {/* Window title */}
          <div className="relative h-[25px] shrink-0 bg-[#ececec] flex items-center justify-end gap-[11px] pr-[6px] text-[#3a3a3a]">
            <h1 className="absolute inset-x-0 text-center pointer-events-none font-['Lato',sans-serif] text-[10px] font-bold">
              /media/anasvfx/0EA5072C0EA5072C/HoudiniProjects/gas turb.hip - Houdini FX 20.5.332 - Py3.11
            </h1>
            {["M3 8h5", "M3 4h4v4H3zM5 3h3v3", "M3 3l5 5M8 3l-5 5"].map((d, i) => (
              <button key={d} aria-label={["Minimize", "Restore", "Close"][i]} className="size-3 rounded-full bg-[#dedede] flex items-center justify-center">
                <svg viewBox="0 0 11 11" className="size-[11px]"><path d={d} fill="none" stroke="currentColor" /></svg>
              </button>
            ))}
          </div>

          {/* Menu bar */}
          <div className="h-[17px] shrink-0 bg-[#373737] flex items-center pl-[11px] pr-[5px] text-[8px] text-[#a4a4a4]">
            {MENUS.map((m) => <button key={m} className="mr-[9px]">{m}</button>)}
            <select aria-label="Desktop" className="appearance-none h-[15px] w-14 px-2 bg-[#404040]"><option>Build</option></select>
            <span className="px-[6px]"><UpDown /></span>
            <span className="flex items-center bg-[#404040] h-[15px] w-[70px] pl-[3px]">
              <svg viewBox="0 0 10 10" className="size-[9px]"><circle cx="5" cy="5" r="4" fill="none" stroke="#bbb" /><path d="M5 3v4M3 5h4" stroke="#bbb" /></svg>
              <select aria-label="Radial menu" className="appearance-none flex-1 pl-1"><option>Main</option></select>
            </span>
            <span className="px-[5px]"><UpDown /></span>
            <span className="ml-auto flex items-center bg-[#404040] h-[15px] w-[97px] pl-1">
              <svg viewBox="0 0 12 8" className="w-3 h-2"><path d="M1 2v2l1 1M3 1v4h2V1zM7 1v4M9 1v4h2" fill="none" stroke="#999" /></svg>
              <select aria-label="Take" className="appearance-none flex-1"><option>Main</option></select>
            </span>
            <span className="px-[6px]"><UpDown /></span>
            <span className="pl-1"><HelpDot /></span>
          </div>

          {/* Shelves */}
          <div className="h-[39px] shrink-0 flex bg-[#262626] border-y border-[#1a1a1a] pl-[6px]">
            <Shelf tabs={LEFT_SHELF_TABS} tools={LEFT_TOOLS} className="flex-[615]" />
            <div className="w-[7px] bg-[#3c3c3c] border-x border-[#1a1a1a] shrink-0" />
            <Shelf tabs={RIGHT_SHELF_TABS} tools={RIGHT_TOOLS} className="flex-[608]" />
          </div>

          {/* Panes */}
          <div className="flex-1 flex min-h-0 pl-1 bg-[#3a3a3a]">
            <div className="flex-[832] flex flex-col min-w-0">
              <PaneTabs tabs={["Scene View", "Animation Editor", "Render View", "Composite View", "Motion FX View", "Geometry Spreadsheet"]} />
              <PathBar extras />
              <div className="relative h-[23px] shrink-0 mt-px bg-[#2f2d2e] border-t border-[#555] flex items-center pl-[10px] pr-[3px] text-gray-200">
                <svg viewBox="0 0 12 12" className="size-3">
                  <g fill="#ddd">{[1, 5, 9].map((x) => [1, 5, 9].map((y) => <rect key={`${x}-${y}`} x={x} y={y} width="2" height="2" />))}</g>
                </svg>
                <div className="absolute inset-x-0 flex items-center justify-center gap-[10px]">
                  <svg viewBox="0 0 12 12" className="size-[10px]"><path d="M3 9a4 4 0 1 1 5-5" fill="none" stroke="#bbb" strokeWidth="1.5" /><path d="M5 5l6 3-3 1-1 3z" fill="#ddd" /></svg>
                  <MousePointer2Icon className="size-[10px]" fill="#ccc" />
                  <svg viewBox="0 0 12 12" className="size-3"><path d="M1 4h8v6H2zM8 1l3 5" fill="none" stroke="#ccc" strokeWidth="1.5" /></svg>
                  <span className="size-[15px] bg-[#54708c] flex items-center justify-center"><SparklesIcon className="size-[11px]" strokeWidth={3} /></span>
                  <span className="w-[7px] h-[6px] bg-gray-200" />
                  <span className="w-[8px] h-[7px] bg-[#444]" />
                  <svg viewBox="0 0 12 12" className="size-[11px]"><circle cx="6" cy="7.5" r="3" fill="none" stroke="#ddd" strokeWidth="2" /><path d="M1 1l2 3M5 0l1 3M11 1L9 4" stroke="#ddd" strokeWidth="1.6" /></svg>
                  <SettingsIcon className="size-[10px] bg-gray-100 text-black" strokeWidth={3} />
                </div>
                <div className="ml-auto flex items-center gap-[6px]">
                  <svg viewBox="0 0 10 10" className="size-[10px]"><path d="M1 1h3M1 5h3M1 9h3M6 5h3M6 8h3" stroke="#ccc" strokeWidth="1.5" /></svg>
                  <HelpDot />
                </div>
              </div>
              <div className="flex-1 flex min-h-0">
                <LeftToolbar />
                <View />
                <RightToolbar />
              </div>
            </div>

            <div className="w-[6px] shrink-0 bg-[#232323]" />

            <div className="flex-[394] flex flex-col min-w-0">
              <PaneTabs italic tabs={["vvisualization", "Take List", "Performance Monitor"]} />
              <PathBar />
              <Parameters />
              <div className="h-[6px] shrink-0 bg-[#484848] mt-[2px]" />
              <PaneTabs italic tabs={["/obj/sphere1/dopnet1/gasdisturb1", "Tree View", "Material Palette", "Asset Browser"]} />
              <PathBar />
              <div className="h-[19px] shrink-0 bg-[#363636] border-b border-[#222] flex items-center pl-3 pr-[3px] text-[8px] text-[#c0c0c0]">
                <div className="flex gap-[9px]">
                  {["Add", "Edit", "Go", "View", "Tools", "Layout", "Labs", "Help"].map((m) => <button key={m}>{m}</button>)}
                </div>
                <div className="ml-auto flex items-center gap-[5px] text-gray-200">
                  <svg viewBox="0 0 11 11" className="size-[11px]"><path d="M2 9l7-7M3 2l6 7" stroke="#ddd" strokeWidth="1.8" /><path d="M0 3l3-3 2 2-3 3z" fill="#ddd" /></svg>
                  <ListTreeIcon className="size-[11px]" />
                  <span className="size-[9px] mx-px bg-gray-200" />
                  <svg viewBox="0 0 11 11" className="size-[11px]"><rect width="11" height="11" fill="#e9e3d4" /><path d="M0 3h11M0 7h11M4 0v11M8 0v11" stroke="#a8683a" /></svg>
                  <Grid3x3Icon className="size-[11px] text-gray-400" />
                  <ImageIcon className="size-[11px]" strokeWidth={3} />
                  <svg viewBox="0 0 11 11" className="size-[11px]"><path d="M1 1h10v6l-4 3H1z" fill="#e8e04a" /><path d="M3 4h5M3 6h3" stroke="#555" /></svg>
                  <svg viewBox="0 0 11 11" className="size-[11px]"><rect width="10" height="10" fill="#7fb0cf" /><circle cx="8" cy="8" r="3" fill="#2a4a5c" /></svg>
                  <svg viewBox="0 0 11 11" className="size-[11px]"><rect y="2" width="10" height="8" rx="1" fill="#d99a4e" /><path d="M0 5h10" stroke="#8a5a24" /></svg>
                  <SearchIcon className="size-[11px]" strokeWidth={3} />
                  <span className="size-[10px] bg-gray-200 flex items-center justify-center"><span className="size-1 bg-black" /></span>
                </div>
              </div>
              <Network />
            </div>
          </div>

          <Timeline />

          {/* Status bar */}
          <footer className="h-[17px] shrink-0 flex justify-end text-[7px] text-[#b8b8b8]">
            <div className="flex items-center w-[200px] bg-[#353535] border-t border-[#222] pr-[6px]">
              <MessageCircleIcon className="size-3 mx-[3px] text-gray-200" fill="#ddd" />
              <select aria-label="Cook path" className="appearance-none ml-px w-[70px] h-[15px] pl-2 bg-[#424242]"><option>/obj/sphere1/d…</option></select>
              <span className="px-[5px]"><UpDown /></span>
              <svg viewBox="0 0 12 10" className="w-3 h-[9px] mx-1"><path d="M1 6c2-5 8-5 10 0" fill="none" stroke="#555" strokeWidth="2" /></svg>
              <select aria-label="Update mode" className="appearance-none flex-1 h-[15px] bg-[#424242] text-center"><option>Auto Update</option></select>
              <span className="pl-[5px]"><UpDown /></span>
            </div>
          </footer>
        </main>
      </div>

      {/* Channel mark and captions over the recording */}
      <div className="absolute left-[25px] top-[34px] flex items-center gap-[6px] pointer-events-none text-[26px] leading-[30px] font-bold text-white/85 whitespace-nowrap">
        爱学习的老土狗
        <BiliMark />
      </div>
      <div className="absolute bottom-[50px] left-1/2 -translate-x-1/2 h-[45px] px-[11px] bg-black/50 text-center text-white whitespace-nowrap pointer-events-none [text-shadow:0_0_2px_#000,1px_1px_1px_#000]">
        <div className="text-[17px] leading-[24px]">现在，回顾一下到目前为止发生了什么，我们说过我们已经为可视化创建了两个场</div>
        <div className="font-['Noto_Sans',sans-serif] text-[17px] leading-[21px]">
          Now, to recap what happened till now, we said that we already created two fields for visualization
        </div>
      </div>
    </div>
  )
}
